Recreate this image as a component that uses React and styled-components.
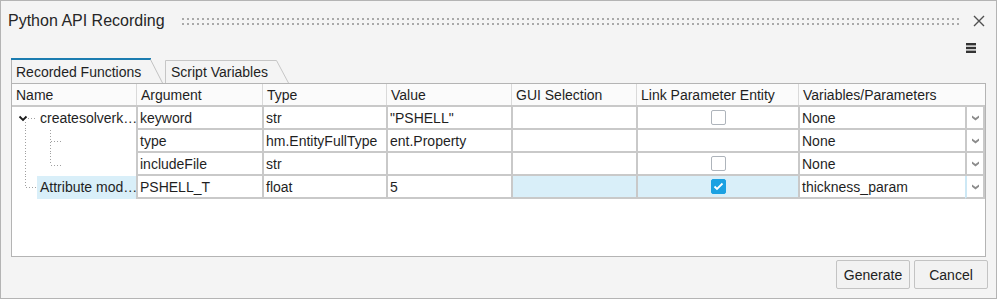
import React from 'react';
import styled, { createGlobalStyle } from 'styled-components';

const Global = createGlobalStyle`
  html, body { margin: 0; padding: 0; background: #f4f4f4; }
  body { font-family: "Liberation Sans", Arial, sans-serif; }
  * { box-sizing: border-box; }
`;

const GRID = '#c9c9c9';
const SEL = '#d9eff9';
const COLS = '124px 126px 124px 125px 125px 162px 167px 20px';

const Dialog = styled.div`
  width: 997px;
  height: 299px;
  border: 1px solid #b4b4b4;
  background: #f4f4f4;
  display: flex;
  flex-direction: column;
  color: #1f1f1f;
  font-size: 14px;
  font-family: "Liberation Sans", Arial, sans-serif;
`;

const TitleBar = styled.div`
  height: 40px;
  flex: none;
  display: flex;
  align-items: center;
  padding: 0 11px 0 7px;
`;

const Title = styled.div`
  font-size: 16px;
  color: #262626;
  white-space: nowrap;
`;

const Grip = styled.div`
  flex: 1;
  min-width: 0;
  margin: 0 11px 0 17px;
  svg { display: block; }
`;

const IconBox = styled.svg`
  display: block;
  flex: none;
`;

const Toolbar = styled.div`
  height: 16px;
  flex: none;
  display: flex;
  justify-content: flex-end;
  padding: 2px 20px 0 0;
`;

const TabRow = styled.div`
  height: 26px;
  flex: none;
  display: flex;
  align-items: flex-end;
  gap: 2px;
  padding-left: 10px;
`;

const Tab = styled.div`
  position: relative;
  width: ${p => p.$w}px;
  height: ${p => (p.$active ? 25 : 23)}px;
  display: flex;
  align-items: center;
  padding: ${p => (p.$active ? '2px 0 0 5px' : '1px 0 0 6px')};
  white-space: nowrap;
  color: #1f1f1f;
`;

const TabOutline = styled.svg`
  position: absolute;
  left: 0;
  top: 0;
  pointer-events: none;
`;

const Table = styled.div`
  flex: none;
  height: 174px;
  margin: 0 10px;
  border: 1px solid #b4b4b4;
  background: #ffffff;
  display: flex;
  flex-direction: column;
`;

const HeaderRow = styled.div`
  display: grid;
  grid-template-columns: 124px 126px 124px 125px 125px 162px 187px;
  height: 23px;
  border-bottom: 2px solid ${GRID};
  background: #fbfbfb;
`;

const HeadCell = styled.div`
  display: flex;
  align-items: center;
  padding-left: 4px;
  border-left: ${p => (p.$first ? 'none' : '1px solid #dadada')};
  white-space: nowrap;
  overflow: hidden;
`;

const Row = styled.div`
  display: grid;
  grid-template-columns: ${COLS};
  height: 23px;
`;

const NameCell = styled.div`
  display: flex;
  align-items: stretch;
  height: 23px;
`;

const NameLabel = styled.div`
  flex: 1;
  display: flex;
  align-items: center;
  padding: 0 0 2px 3px;
  background: ${p => (p.$selected ? SEL : 'transparent')};
  white-space: nowrap;
  overflow: hidden;
`;

const Cell = styled.div`
  display: flex;
  align-items: center;
  justify-content: ${p => (p.$center ? 'center' : 'flex-start')};
  padding-left: ${p => (p.$center ? 0 : 2)}px;
  border-left: 2px solid ${GRID};
  border-bottom: 2px solid ${GRID};
  background: ${p => (p.$selected ? SEL : '#ffffff')};
  white-space: nowrap;
  overflow: hidden;
`;

const DropCell = styled.div`
  display: flex;
  align-items: center;
  justify-content: center;
  border-left: 2px solid ${p => (p.$selected ? '#cde8f5' : GRID)};
  border-right: 2px solid ${GRID};
  border-bottom: 2px solid ${GRID};
  background: #ffffff;
`;

const Check = styled.span`
  width: 15px;
  height: 15px;
  border: 1px solid ${p => (p.$checked ? '#1ba1e2' : '#aeb4bb')};
  border-radius: 2px;
  background: ${p => (p.$checked ? '#1ba1e2' : '#ffffff')};
  display: flex;
  align-items: center;
  justify-content: center;
`;

const Footer = styled.div`
  flex: 1;
  display: flex;
  justify-content: flex-end;
  align-items: flex-start;
  gap: 4px;
  padding: 3px 8px 0 0;
`;

const Button = styled.button`
  width: 74px;
  height: 29px;
  border: 1px solid #c3c3c3;
  border-radius: 2px;
  background: #f2f2f2;
  font-family: "Liberation Sans", Arial, sans-serif;
  font-size: 14px;
  color: #222;
  padding: 0;
`;

const DOT = { stroke: '#a0a0a0', strokeWidth: 1, strokeDasharray: '1 2', fill: 'none' };

function Tree({ kind }) {
  if (kind === 'parent') {
    return (
      <IconBox width="25" height="23">
        <path d="M7.5 9.5 L11 13 L14.5 9.5" stroke="#1a1a1a" strokeWidth="1.8" fill="none" />
        <line x1="16" y1="11.5" x2="25" y2="11.5" style={DOT} />
        <line x1="13.5" y1="15" x2="13.5" y2="23" style={DOT} />
      </IconBox>
    );
  }
  if (kind === 'childMid' || kind === 'childLast') {
    const last = kind === 'childLast';
    return (
      <IconBox width="51" height="23">
        <line x1="13.5" y1="0" x2="13.5" y2="23" style={DOT} />
        <line x1="38.5" y1="0" x2="38.5" y2={last ? 12 : 23} style={DOT} />
        <line x1="39" y1={last ? 12.5 : 11.5} x2="51" y2={last ? 12.5 : 11.5} style={DOT} />
      </IconBox>
    );
  }
  return (
    <IconBox width="25" height="23">
      <line x1="13.5" y1="0" x2="13.5" y2="11" style={DOT} />
      <line x1="14" y1="11.5" x2="25" y2="11.5" style={DOT} />
    </IconBox>
  );
}

const DropArrow = () => (
  <IconBox width="7" height="6" viewBox="0 0 7 6">
    <path d="M0 0.5 L3.5 3 L7 0.5 V2.8 L3.5 5.5 L0 2.8 Z" fill="#8c8c8c" />
  </IconBox>
);

const rows = [
  { tree: 'parent', name: 'createsolverk…', arg: 'keyword', type: 'str', value: '"PSHELL"', check: false, vars: 'None' },
  { tree: 'childMid', arg: 'type', type: 'hm.EntityFullType', value: 'ent.Property', check: null, vars: 'None' },
  { tree: 'childLast', arg: 'includeFile', type: 'str', value: '', check: false, vars: 'None' },
  { tree: 'last', name: 'Attribute mod…', arg: 'PSHELL_T', type: 'float', value: '5', check: true, vars: 'thickness_param', selected: true },
];

export default function App() {
  return (
    <>
      <Global />
      <Dialog>
        <TitleBar>
          <Title>Python API Recording</Title>
          <Grip>
            <svg width="100%" height="8">
              <defs>
                <pattern id="gripdots" x="0" y="1" width="5" height="5" patternUnits="userSpaceOnUse">
                  <rect width="2" height="2" fill="#a9a9a9" />
                </pattern>
              </defs>
              <rect x="0" y="1" width="100%" height="7" fill="url(#gripdots)" />
            </svg>
          </Grip>
          <IconBox width="12" height="12" viewBox="0 0 12 12">
            <path d="M1 1 L11 11 M11 1 L1 11" stroke="#505050" strokeWidth="1.4" fill="none" />
          </IconBox>
        </TitleBar>
        <Toolbar>
          <IconBox width="10" height="10" viewBox="0 0 10 10">
            <rect x="0" y="0" width="10" height="2.4" fill="#333" />
            <rect x="0" y="3.8" width="10" height="2.4" fill="#333" />
            <rect x="0" y="7.6" width="10" height="2.4" fill="#333" />
          </IconBox>
        </Toolbar>
        <TabRow>
          <Tab $active $w={152}>
            <TabOutline width="152" height="25">
              <line x1="0.5" y1="1" x2="0.5" y2="25" stroke="#b4b4b4" />
              <rect x="0" y="0" width="140" height="2" fill="#1b7cb0" />
              <line x1="139.5" y1="1.5" x2="151.5" y2="25" stroke="#c2c2c2" />
            </TabOutline>
            Recorded Functions
          </Tab>
          <Tab $w={124}>
            <TabOutline width="124" height="23">
              <polyline points="0.5,23 0.5,0.5 111.5,0.5 123.5,23" stroke="#c6c6c6" fill="none" />
            </TabOutline>
            Script Variables
          </Tab>
        </TabRow>
        <Table>
          <HeaderRow>
            <HeadCell $first>Name</HeadCell>
            <HeadCell>Argument</HeadCell>
            <HeadCell>Type</HeadCell>
            <HeadCell>Value</HeadCell>
            <HeadCell>GUI Selection</HeadCell>
            <HeadCell>Link Parameter Entity</HeadCell>
            <HeadCell>Variables/Parameters</HeadCell>
          </HeaderRow>
          {rows.map((r, i) => (
            <Row key={i}>
              <NameCell>
                <Tree kind={r.tree} />
                {r.name && <NameLabel $selected={r.selected}>{r.name}</NameLabel>}
              </NameCell>
              <Cell>{r.arg}</Cell>
              <Cell>{r.type}</Cell>
              <Cell>{r.value}</Cell>
              <Cell $selected={r.selected} />
              <Cell $center $selected={r.selected}>
                {r.check !== null && (
                  <Check $checked={r.check}>
                    {r.check && (
                      <svg width="11" height="9" viewBox="0 0 11 9">
                        <path d="M1.5 4.5 L4 7 L9.5 1.5" stroke="#ffffff" strokeWidth="1.8" fill="none" />
                      </svg>
                    )}
                  </Check>
                )}
              </Cell>
              <Cell>{r.vars}</Cell>
              <DropCell $selected={r.selected}>
                <DropArrow />
              </DropCell>
            </Row>
          ))}
        </Table>
        <Footer>
          <Button>Generate</Button>
          <Button>Cancel</Button>
        </Footer>
      </Dialog>
    </>
  );
}
